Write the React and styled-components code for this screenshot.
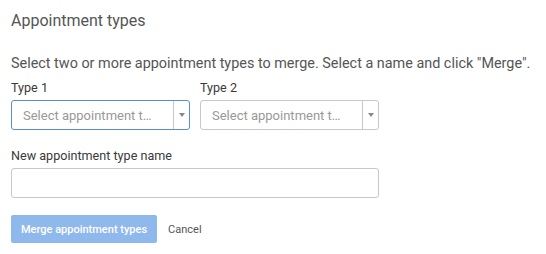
import React from 'react';
import styled, {createGlobalStyle} from 'styled-components';

const text_color = "#555";
const label_color = "#3a3a3a";
const border_color = "#c8c8c8";
const focus_color = "#5b8ccf";
const button_color = "#8fb8ec";

const font_family = "Roboto, 'Liberation Sans', sans-serif";

const GlobalStyle = createGlobalStyle`
  body{
    margin: 0;
    background: #fff;
    font-family: ${font_family};
  }
`;

const Panel = styled.div`
  width: 546px;
  height: 254px;
  box-sizing: border-box;
  padding: 11px 11px 0;
  color: ${text_color};
`;

const Title = styled.h2`
  margin: 0;
  font-size: 16px;
  font-weight: 400;
  line-height: 20px;
  color: ${text_color};
`;

const Description = styled.p`
  margin: 24px 0 0;
  font-size: 14.4px;
  line-height: 18px;
  color: ${text_color};
  white-space: nowrap;
`;

const Row = styled.div`
  display: flex;
  gap: 10px;
  margin-top: 8px;
`;

const Field = styled.div`
  display: flex;
  flex-direction: column;
  width: ${props => props.width || "179px"};
  margin-top: ${props => props.top || "0"};
`;

const Label = styled.label`
  font-size: 12.6px;
  line-height: 14px;
  color: ${label_color};
  margin-bottom: 5px;
`;

const Select = styled.div`
  display: flex;
  height: 30px;
  box-sizing: border-box;
  border: 1px solid ${props => props.focused ? focus_color : border_color};
  border-radius: 3px;
  background: #fff;
  .value{
    flex: 1;
    display: flex;
    align-items: center;
    padding-left: 11px;
    font-size: 13px;
    color: #999;
    white-space: nowrap;
    overflow: hidden;
  }
  .arrow{
    width: 15px;
    border-left: 1px solid ${border_color};
    display: flex;
    align-items: center;
    justify-content: center;
    svg{
      display: block;
    }
  }
`;

const Input = styled.input`
  height: 30px;
  box-sizing: border-box;
  border: 1px solid ${border_color};
  border-radius: 3px;
  outline: none;
  padding: 0 10px;
  font-family: ${font_family};
  font-size: 13px;
`;

const Actions = styled.div`
  display: flex;
  align-items: center;
  gap: 11px;
  margin-top: 17px;
`;

const Button = styled.button`
  border: none;
  outline: none;
  margin: 0;
  height: 28px;
  border-radius: 2px;
  font-family: ${font_family};
  font-size: 11px;
  color: ${props => props.link ? text_color : "#fff"};
  font-weight: ${props => props.link ? 400 : 500};
  background-color: ${props => props.link ? "transparent" : button_color};
  padding: ${props => props.link ? "0" : "0 10px"};
  cursor: pointer;
`;

function Dropdown({focused}){
  return(
    <Select focused={focused}>
      <div className="value">Select appointment t…</div>
      <div className="arrow">
        <svg width="6" height="4" viewBox="0 0 6 4"><path d="M0 0 L6 0 L3 4 Z" fill="#888"/></svg>
      </div>
    </Select>
  )
}

export default function App(){
  return(
    <Panel>
      <GlobalStyle/>
      <Title>Appointment types</Title>
      <Description>Select two or more appointment types to merge. Select a name and click "Merge".</Description>
      <Row>
        <Field>
          <Label>Type 1</Label>
          <Dropdown focused/>
        </Field>
        <Field>
          <Label>Type 2</Label>
          <Dropdown/>
        </Field>
      </Row>
      <Field width="368px" top="19px">
        <Label>New appointment type name</Label>
        <Input/>
      </Field>
      <Actions>
        <Button>Merge appointment types</Button>
        <Button link>Cancel</Button>
      </Actions>
    </Panel>
  )
}
